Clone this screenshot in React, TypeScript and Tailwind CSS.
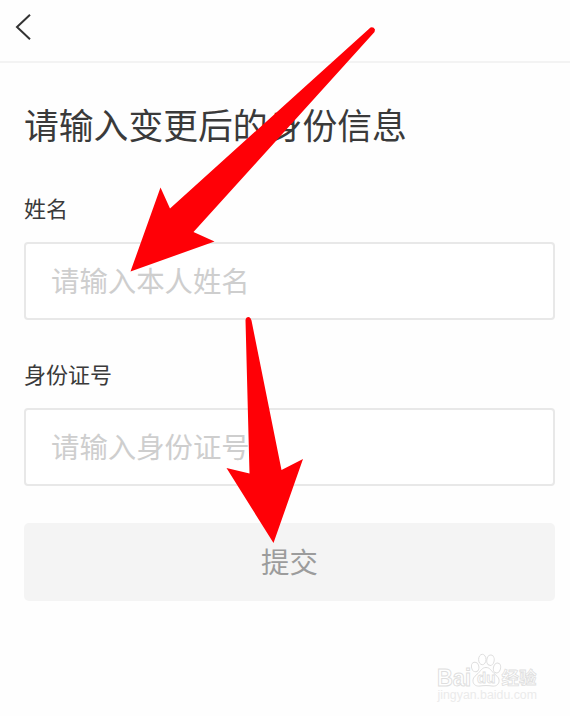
import { ChangeEvent, useState } from 'react';

interface FieldProps {
  label: string;
  placeholder: string;
  value: string;
  onChange: (v: string) => void;
}

function Field({ label, placeholder, value, onChange }: FieldProps) {
  return (
    <label className="block">
      <span className="block h-8 text-[22px] leading-8 text-[#3a3a3a]">{label}</span>
      <input
        className="mt-[19px] block h-[78px] w-full rounded-[4px] border-2 border-[#e8e8e8] bg-white px-[25px] pb-[4px] text-[28.4px] text-[#333] outline-none placeholder:text-[#cecece]"
        placeholder={placeholder}
        value={value}
        onChange={(e: ChangeEvent<HTMLInputElement>) => onChange(e.target.value)}
      />
    </label>
  );
}

function Watermark() {
  return (
    <div className="absolute top-[650px] left-[434px]">
      <svg width="120" height="56" viewBox="0 0 120 56" fill="#fff" stroke="#dedede" strokeWidth="1">
        <text x="3" y="35.5" fontSize="23.5" textLength="34" lengthAdjust="spacingAndGlyphs" fontFamily="'Liberation Sans', sans-serif" fontWeight="700">
          Bai
        </text>
        <ellipse cx="41.2" cy="17" rx="3.7" ry="4.8" transform="rotate(-12 41.2 17)" />
        <ellipse cx="48.3" cy="9.5" rx="3.7" ry="5.2" />
        <ellipse cx="56.5" cy="10.2" rx="3.7" ry="5.2" transform="rotate(8 56.5 10.2)" />
        <ellipse cx="63" cy="18" rx="3.6" ry="5" transform="rotate(15 63 18)" />
        <path d="M52 17.500c4 0 5.500 3.500 8 6 3 2.500 5.500 4.500 5 8-.5 3.500-3.500 5-7 4.500-4-.6-8-.6-12 0-3.500.5-6.500-1-7-4.500-.4-3.500 2-5.500 5-8 2.500-2.500 4-6 8-6z" />
        <text x="43" y="33" fontSize="15" fontFamily="'Liberation Sans', sans-serif" fontWeight="700" fill="#fff" strokeWidth=".8">
          du
        </text>
        <text x="67.500" y="34" fontSize="17.500" fontFamily="'Noto Sans CJK SC', sans-serif" fontWeight="700" strokeWidth=".8">
          经验
        </text>
        <text x="3.500" y="48.500" fontSize="12" fontFamily="'Liberation Sans', sans-serif" fill="#ebebeb" stroke="none" textLength="99.500" lengthAdjust="spacingAndGlyphs">
          jingyan.baidu.com
        </text>
      </svg>
    </div>
  );
}

export default function App() {
  const [name, setName] = useState('');
  const [idNo, setIdNo] = useState('');

  return (
    <div className="relative h-[716px] w-[570px] overflow-hidden bg-[#fefefe] font-['Noto_Sans_CJK_SC',sans-serif]">
      <header className="flex h-[63px] items-start border-b-2 border-[#f3f3f3] pt-[14px] pl-[15px]">
        <button type="button" aria-label="返回">
          <svg width="17" height="27" viewBox="0 0 17 27" fill="none" stroke="#333" strokeWidth="2">
            <path d="M15 .8L2 13l13 12.200" />
          </svg>
        </button>
      </header>

      <main className="pt-[36px] pr-[15px] pl-6">
        <h1 className="h-[50px] text-[34.8px] leading-[50px] whitespace-nowrap text-[#3a3a3a]">
          请输入变更后的身份信息
        </h1>
        <div className="mt-[42px] space-y-[37px]">
          <Field label="姓名" placeholder="请输入本人姓名" value={name} onChange={setName} />
          <Field label="身份证号" placeholder="请输入身份证号" value={idNo} onChange={setIdNo} />
        </div>
        <button
          type="button"
          className="mt-[37px] block h-[78px] w-full rounded-[5px] bg-[#f4f4f4] pb-[2px] text-[28.4px] text-[#9c9c9c]"
        >
          提交
        </button>
      </main>

      <Watermark />

      {/* hint arrows */}
      <svg className="pointer-events-none absolute inset-0" width="570" height="716" fill="#ff0006">
        <path d="M130.500 271.500L160.500 187.500 170 208.500 370.500 27.500Q373.500 26.500 375 29.500L374.500 32 193.500 232 214.500 241.500Z" />
        <path d="M273.500 543L226.500 468 249.500 473.500 245.500 320Q246 317 248.500 317 251 317.500 251.500 320.500L281.500 470 303 459Z" />
      </svg>
    </div>
  );
}
